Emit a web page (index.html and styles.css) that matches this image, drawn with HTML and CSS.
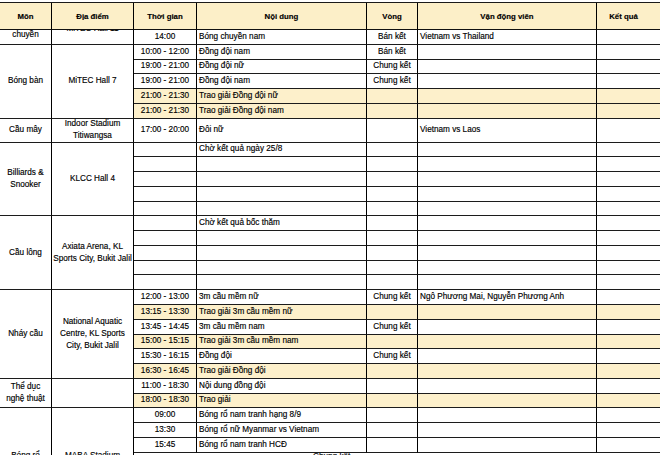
FILE: index.html
```html
<!DOCTYPE html>
<html lang="vi">
<head>
<meta charset="utf-8">
<title>Lịch thi đấu</title>
<link rel="stylesheet" href="styles.css">
</head>
<body>
<div class="sheet">
  <div class="grid head">
    <div class="hc">Môn</div>
    <div class="hc">Địa điểm</div>
    <div class="hc">Thời gian</div>
    <div class="hc">Nội dung</div>
    <div class="hc">Vòng</div>
    <div class="hc">Vận động viên</div>
    <div class="hc k kq">Kết quả</div>
  </div>
  <div class="viewport">
    <div class="grid body">
      <!-- Bóng chuyền -->
      <div class="c m s2">Bóng<br>chuyền</div>
      <div class="c m s2">MiTEC Hall 11</div>
      <div class="c t"></div><div class="c"></div><div class="c v"></div><div class="c"></div><div class="c k"></div>
      <div class="c t">14:00</div><div class="c">Bóng chuyền nam</div><div class="c v">Bán kết</div><div class="c">Vietnam vs Thailand</div><div class="c k"></div>

      <!-- Bóng bàn -->
      <div class="c m s5">Bóng bàn</div>
      <div class="c m s5">MiTEC Hall 7</div>
      <div class="c t">10:00 - 12:00</div><div class="c">Đồng đội nam</div><div class="c v">Bán kết</div><div class="c"></div><div class="c k"></div>
      <div class="c t">19:00 - 21:00</div><div class="c">Đồng đội nữ</div><div class="c v">Chung kết</div><div class="c"></div><div class="c k"></div>
      <div class="c t">19:00 - 21:00</div><div class="c">Đồng đội nam</div><div class="c v">Chung kết</div><div class="c"></div><div class="c k"></div>
      <div class="c t y">21:00 - 21:30</div><div class="c y">Trao giải Đồng đội nữ</div><div class="c v y"></div><div class="c y"></div><div class="c k y"></div>
      <div class="c t y">21:00 - 21:30</div><div class="c y">Trao giải Đồng đội nam</div><div class="c v y"></div><div class="c y"></div><div class="c k y"></div>

      <!-- Cầu mây -->
      <div class="c m">Cầu mây</div>
      <div class="c m">Indoor Stadium<br>Titiwangsa</div>
      <div class="c t">17:00 - 20:00</div><div class="c">Đôi nữ</div><div class="c v"></div><div class="c">Vietnam vs Laos</div><div class="c k"></div>

      <!-- Billiards & Snooker -->
      <div class="c m s5">Billiards &amp;<br>Snooker</div>
      <div class="c m s5">KLCC Hall 4</div>
      <div class="c t"></div><div class="c">Chờ kết quả ngày 25/8</div><div class="c v"></div><div class="c"></div><div class="c k"></div>
      <div class="c t"></div><div class="c"></div><div class="c v"></div><div class="c"></div><div class="c k"></div>
      <div class="c t"></div><div class="c"></div><div class="c v"></div><div class="c"></div><div class="c k"></div>
      <div class="c t"></div><div class="c"></div><div class="c v"></div><div class="c"></div><div class="c k"></div>
      <div class="c t"></div><div class="c"></div><div class="c v"></div><div class="c"></div><div class="c k"></div>

      <!-- Cầu lông -->
      <div class="c m s5">Cầu lông</div>
      <div class="c m s5">Axiata Arena, KL<br>Sports City, Bukit Jalil</div>
      <div class="c t"></div><div class="c">Chờ kết quả bốc thăm</div><div class="c v"></div><div class="c"></div><div class="c k"></div>
      <div class="c t"></div><div class="c"></div><div class="c v"></div><div class="c"></div><div class="c k"></div>
      <div class="c t"></div><div class="c"></div><div class="c v"></div><div class="c"></div><div class="c k"></div>
      <div class="c t"></div><div class="c"></div><div class="c v"></div><div class="c"></div><div class="c k"></div>
      <div class="c t"></div><div class="c"></div><div class="c v"></div><div class="c"></div><div class="c k"></div>

      <!-- Nháy cầu -->
      <div class="c m s6">Nháy cầu</div>
      <div class="c m s6">National Aquatic<br>Centre, KL Sports<br>City, Bukit Jalil</div>
      <div class="c t">12:00 - 13:00</div><div class="c">3m cầu mềm nữ</div><div class="c v">Chung kết</div><div class="c">Ngô Phương Mai, Nguyễn Phương Anh</div><div class="c k"></div>
      <div class="c t y">13:15 - 13:30</div><div class="c y">Trao giải 3m cầu mềm nữ</div><div class="c v y"></div><div class="c y"></div><div class="c k y"></div>
      <div class="c t">13:45 - 14:45</div><div class="c">3m cầu mềm nam</div><div class="c v">Chung kết</div><div class="c"></div><div class="c k"></div>
      <div class="c t y">15:00 - 15:15</div><div class="c y">Trao giải 3m cầu mềm nam</div><div class="c v y"></div><div class="c y"></div><div class="c k y"></div>
      <div class="c t">15:30 - 16:15</div><div class="c">Đồng đội</div><div class="c v">Chung kết</div><div class="c"></div><div class="c k"></div>
      <div class="c t y">16:30 - 16:45</div><div class="c y">Trao giải Đồng đội</div><div class="c v y"></div><div class="c y"></div><div class="c k y"></div>

      <!-- Thể dục nghệ thuật -->
      <div class="c m s2">Thể dục<br>nghệ thuật</div>
      <div class="c m s2"></div>
      <div class="c t">11:00 - 18:30</div><div class="c">Nội dung đồng đội</div><div class="c v"></div><div class="c"></div><div class="c k"></div>
      <div class="c t y">18:00 - 18:30</div><div class="c y">Trao giải</div><div class="c v y"></div><div class="c y"></div><div class="c k y"></div>

      <!-- Bóng rổ -->
      <div class="c m s4">Bóng rổ</div>
      <div class="c m s4">MABA Stadium</div>
      <div class="c t">09:00</div><div class="c">Bóng rổ nam tranh hạng 8/9</div><div class="c v"></div><div class="c"></div><div class="c k"></div>
      <div class="c t">13:30</div><div class="c">Bóng rổ nữ Myanmar vs Vietnam</div><div class="c v"></div><div class="c"></div><div class="c k"></div>
      <div class="c t">15:45</div><div class="c">Bóng rổ nam tranh HCĐ</div><div class="c v"></div><div class="c"></div><div class="c k"></div>
      <div class="c next">Chung kết</div>
    </div>
  </div>
</div>
</body>
</html>
```
FILE: styles.css
```css
* {
  box-sizing: border-box;
}

html, body {
  margin: 0;
  padding: 0;
  background: #ffffff;
}

body {
  width: 660px;
  height: 455px;
  overflow: hidden;
  font-family: "Liberation Sans", Arial, sans-serif;
  font-size: 8.2px;
  color: #000000;
  -webkit-text-stroke: 0.15px #000000;
}

.sheet {
  padding-top: 2px;
}

.grid {
  display: grid;
  grid-template-columns: 52px 82px 63px 170px 51px 179px 63px;
  width: 660px;
}

.head {
  grid-template-rows: 27px;
  border-top: 1px solid #1a1a1a;
  background: #fcefc8;
}

.hc {
  display: flex;
  align-items: center;
  justify-content: center;
  border-right: 1px solid #000000;
  border-bottom: 1px solid #111111;
  font-weight: bold;
  font-size: 7.8px;
  white-space: nowrap;
}

.hc.kq {
  padding-right: 10px;
}

.viewport {
  height: 425px;
  overflow: hidden;
}

.body {
  margin-top: -16px;
  grid-template-rows: 16px 14.78px repeat(5, 14.78px) 24px repeat(21, 14.78px) 52px;
}

.c {
  display: flex;
  align-items: center;
  padding: 0 2px;
  border-right: 1px solid #000000;
  border-bottom: 1px solid #1c1c1c;
  white-space: nowrap;
  overflow: hidden;
  line-height: 10px;
}

.k {
  border-right: none;
}

.t, .v {
  justify-content: center;
}

.m {
  justify-content: center;
  text-align: center;
  line-height: 11.8px;
  padding: 0;
}

.s2 { grid-row: span 2; }
.s4 { grid-row: span 4; }
.s5 { grid-row: span 5; }
.s6 { grid-row: span 6; }

.y {
  background: #fdf0cb;
}

.next {
  grid-column: span 5;
  align-items: flex-start;
  padding-left: 179px;
  padding-top: 0;
  border-right: none;
  border-bottom: none;
  line-height: 8px;
}
```
